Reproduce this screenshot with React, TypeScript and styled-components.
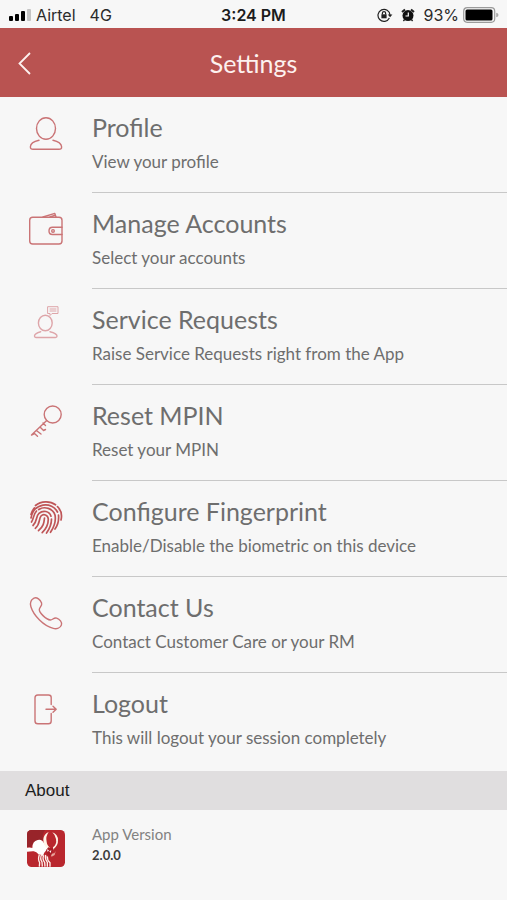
import React from "react";
import styled, { createGlobalStyle } from "styled-components";

const GlobalStyle = createGlobalStyle`
  * { box-sizing: border-box; }
  body { margin: 0; background: #f7f7f7; font-family: Lato, "Open Sans", sans-serif; }
`;

const Page = styled.div`
  min-height: 100vh;
  background: #f7f7f7;
  color: #6e6e6e;
`;

const StatusBar = styled.div`
  display: grid;
  grid-template-columns: 1fr auto 1fr;
  align-items: center;
  height: 28px;
  padding: 2px 8px 0;
  font: 16px/24px Inter, sans-serif;
  color: #2a2a2a;
`;

const StatusGroup = styled.div<{ $end?: boolean }>`
  display: flex;
  align-items: center;
  gap: ${(p) => (p.$end ? 4 : 5)}px;
  justify-content: ${(p) => (p.$end ? "flex-end" : "flex-start")};
`;

const Network = styled.span`
  margin-left: 9px;
`;

const Clock = styled.time`
  font-weight: 600;
  color: #1c1c1c;
`;

const StatusIcon = styled.svg`
  display: block;
  margin-right: 4px;
`;

const TitleBar = styled.header`
  display: grid;
  grid-template-columns: 48px 1fr 48px;
  align-items: center;
  height: 69px;
  background: #b95351;
  color: #fdf1ef;
`;

const BackButton = styled.button`
  display: flex;
  align-items: center;
  height: 48px;
  padding: 0 0 0 17px;
  border: 0;
  background: none;
  color: inherit;
  cursor: pointer;
`;

const Heading = styled.h1`
  margin: 0;
  text-align: center;
  font-size: 25px;
  font-weight: 400;
  line-height: 32px;
`;

const List = styled.ul`
  margin: 0;
  padding: 0 0 2px;
  list-style: none;
`;

const Row = styled.button`
  display: grid;
  grid-template-columns: 92px 1fr;
  width: 100%;
  height: 96px;
  padding: 0;
  border: 0;
  background: none;
  color: inherit;
  font-family: inherit;
  text-align: left;
  cursor: pointer;
`;

const IconCell = styled.span`
  display: flex;
  justify-content: center;
  padding-top: 17px;
`;

const LineIcon = styled.svg<{ $faint?: boolean }>`
  width: 40px;
  height: 40px;
  fill: none;
  stroke: ${(p) => (p.$faint ? "#dea5a9" : "#ca7476")};
  stroke-width: 1.4;
  stroke-linecap: round;
  stroke-linejoin: round;
`;

const RowText = styled.span<{ $last?: boolean }>`
  display: flex;
  flex-direction: column;
  gap: 7px;
  padding-top: 14px;
  border-bottom: 1px solid ${(p) => (p.$last ? "transparent" : "#c8c8c8")};
`;

const RowTitle = styled.span`
  font-size: 25px;
  line-height: 32px;
`;

const RowDetail = styled.span`
  font-size: 17px;
  line-height: 24px;
`;

const SectionTitle = styled.h2`
  margin: 0;
  padding: 0 25px;
  background: #e0dedf;
  color: #1c1c1c;
  font: 400 17px/39px "Liberation Sans", sans-serif;
`;

const Version = styled.section`
  display: grid;
  grid-template-columns: 92px 1fr;
  padding-top: 13px;
`;

const LogoCell = styled.div`
  display: flex;
  justify-content: center;
  padding-top: 7px;
`;

const VersionLabel = styled.div`
  font-size: 15px;
  line-height: 22px;
  color: #828282;
`;

const VersionNumber = styled.div`
  font-size: 13px;
  font-weight: 700;
  line-height: 20px;
  color: #3c3c3c;
`;

const ProfileIcon = () => (
  <LineIcon viewBox="0 0 40 40">
    <ellipse cx="20" cy="14.5" rx="9.5" ry="10.8" />
    <path d="M13 26.3C8 27.4 4.5 29.5 4.4 32.7C4.3 34.6 5.4 35.3 7 35.3H33C34.8 35.3 35.8 34.6 35.6 32.7C35.3 29.5 32 27.4 27 26.3" />
  </LineIcon>
);

const WalletIcon = () => (
  <LineIcon viewBox="0 0 40 40">
    <rect x="3.7" y="7.2" width="32.3" height="26.8" rx="3" />
    <path d="M17 7L28.8 3.4L30 7M24 7L28.5 5.5M36 17.3H26.5Q23 17.3 23 21Q23 24.5 26.5 24.5H36" />
    <circle cx="27" cy="20.9" r="1.3" />
  </LineIcon>
);

const ServiceIcon = () => (
  <LineIcon viewBox="0 0 40 40" $faint>
    <ellipse cx="19.3" cy="17" rx="6.9" ry="7.8" />
    <path d="M14.7 25.7C10.5 26.8 8.5 28.2 8.5 30C8.5 31.6 10 31.5 12 31.5H27C29.5 31.5 31 31.6 31 30C31 28.2 28.5 26.8 24 25.7" />
    <path d="M22 .7H32V7.5H26L24 9.5V7.5H22ZM24 3H30M24 5H30" strokeWidth="1" />
  </LineIcon>
);

const KeyIcon = () => (
  <LineIcon viewBox="0 0 40 40">
    <circle cx="26.7" cy="12.5" r="8.5" />
    <path d="M20.7 18.5L5.5 33L8.5 31.5L11.5 34.3M11 29L15 32M14.5 25.5L17.5 28.5L19.5 27.5M17 21L19.5 23.5" />
  </LineIcon>
);

const FingerprintIcon = () => (
  <LineIcon viewBox="0 0 40 40">
    <g stroke="#bf5557" strokeWidth="1.7">
      <path d="M9.5 7.5C15 3 24 2.7 29.5 6.8M31.5 8.7C35 12 36.2 17 35 22" />
      <path d="M5 16.5C6 13.5 7 11.3 8.5 9.8M5 20C6 14 10 8.3 17 7.1C23 6 29 9 31.5 14M32.5 17C33 22 31.6 27.5 29 31" />
      <path d="M5.5 24C8 20.5 6.8 17 10.5 13M12.7 11.5C18.5 7.8 27 10.5 29 17C30 22 28 29 24.5 34.3" />
      <path d="M7 27.5C11.5 23.5 9.5 18.5 13 15.4C17 11.8 23.4 13 25 18.2M25.5 21C25.5 26 23.5 31 20.5 35" />
      <path d="M9.3 30.3C14.5 26 12.5 21 15 18C17.5 15.4 22 16.8 22.3 21C22.3 26 20 31 16.2 34.6" />
      <path d="M12.5 32.7C17.5 28.5 18 25 18.5 20" />
    </g>
  </LineIcon>
);

const PhoneIcon = () => (
  <LineIcon viewBox="0 0 40 40">
    <path d="M8 4.1C10.8 2.6 14.6 6 15.6 9C16.5 11.8 13.4 13.2 13.3 15.5C13.2 18.8 20.3 25.7 24.3 26C26.6 26.2 27.8 23.1 30.7 24.1C33.5 25 36.5 28.3 35.4 31C34.2 34 30.8 35.3 27.3 34.4C17.7 32 7.6 21.7 4.9 12.8C3.8 9 4.8 5.8 8 4.1Z" />
  </LineIcon>
);

const LogoutIcon = () => (
  <LineIcon viewBox="0 0 40 40">
    <path d="M25.2 14.5V7.5Q25.2 5 22.5 5H11.8Q9 5 9 7.8V31Q9 33.8 11.8 33.8H22.5Q25.2 33.8 25.2 31V23.5M20 19.2H30M27 16.2L30.2 19.2L27 22.2" />
  </LineIcon>
);

const AppLogo = () => (
  <svg width="38" height="37" viewBox="0 0 114 111" role="img" aria-label="App logo">
    <rect width="114" height="111" rx="14" fill="#b9272e" />
    <path d="M0 50V14Q0 0 14 0H54Q45 13 48 30L20 38L12 52Z" fill="#98242a" />
    <path d="M0 53Q10 51 16 54Q16 33 32 30Q45 26 51 40L63 55L56 63Q48 70 48 79Q44 73 36 74Q26 61 17 64L0 65Z" fill="#fff" />
    <path d="M63 57Q48 46 49 28Q50 13 65 6Q55 20 59 35Q60 47 70 53ZM78 52Q90 43 87 27Q85 15 76 7Q93 13 93 31Q94 47 78 59Z" fill="#fff4e8" />
    <path d="M58 59L64 52L79 55L75 71L68 79L60 73Z" fill="#aa1e28" />
    <path d="M60 58L66 61L62 66ZM67 64L73 61L71 69Z" fill="#fff" />
    <path d="M37 74Q32 88 38 98L37 110M44 73Q38 87 45 96L46 110M50 76Q45 88 53 97L54 110M56 75Q53 87 61 97L61 110M61 79Q60 90 69 98L69 110" fill="none" stroke="#fff0ea" strokeWidth="4" />
    <path d="M72 77Q74 69 82 70L86 63L83 75L74 80Z" fill="#e9a39b" />
  </svg>
);

const items = [
  { title: "Profile", detail: "View your profile", Icon: ProfileIcon },
  { title: "Manage Accounts", detail: "Select your accounts", Icon: WalletIcon },
  { title: "Service Requests", detail: "Raise Service Requests right from the App", Icon: ServiceIcon },
  { title: "Reset MPIN", detail: "Reset your MPIN", Icon: KeyIcon },
  { title: "Configure Fingerprint", detail: "Enable/Disable the biometric on this device", Icon: FingerprintIcon },
  { title: "Contact Us", detail: "Contact Customer Care or your RM", Icon: PhoneIcon },
  { title: "Logout", detail: "This will logout your session completely", Icon: LogoutIcon },
];

export default function App() {
  return (
    <Page>
      <GlobalStyle />
      <StatusBar>
        <StatusGroup>
          <svg width="23" height="14" viewBox="0 0 23 14" aria-hidden="true">
            <rect x="1" y="8" width="4" height="5" rx="1" />
            <rect x="7" y="6" width="4" height="7" rx="1" />
            <rect x="13" y="3" width="4" height="10" rx="1" />
            <rect x="19" y="1" width="4" height="12" rx="1" fill="#c4c4c4" />
          </svg>
          <span>Airtel</span>
          <Network>4G</Network>
        </StatusGroup>
        <Clock>3:24 PM</Clock>
        <StatusGroup $end>
          <StatusIcon width="16" height="14" viewBox="0 0 16 14" fill="none" stroke="#222" strokeWidth="1.2" aria-hidden="true">
            <path d="M12.4 10A6 6 0 1 1 13 7" />
            <path d="M10.8 6.5H15.4L13.1 9.3Z" fill="#222" stroke="none" />
            <rect x="4.4" y="6.3" width="5.2" height="4" fill="#222" stroke="none" />
            <path d="M5.4 6.5V5Q5.4 3.6 7 3.6T8.6 5V6.5" />
          </StatusIcon>
          <StatusIcon width="14" height="14" viewBox="0 0 14 14" fill="none" stroke="#222" aria-hidden="true">
            <circle cx="7" cy="7.6" r="5.5" fill="#111" stroke="none" />
            <path d="M1 4L4 1.4M10 1.4L13 4" strokeWidth="2" />
            <path d="M3.6 11.5L2.4 13M10.4 11.5L11.6 13" strokeWidth="1.4" />
            <path d="M7.3 4.4V8H4.5" stroke="#fff" strokeWidth="1.2" />
          </StatusIcon>
          <span>93%</span>
          <svg width="36" height="16" viewBox="0 0 36 16" aria-hidden="true">
            <rect x=".7" y=".7" width="31" height="14.6" rx="3.5" fill="none" stroke="#9b9b9b" strokeWidth="1.2" />
            <rect x="2.5" y="2.5" width="27" height="11" rx="1.5" />
            <path d="M33.2 5.7Q35.5 6 35.5 8T33.2 10.3Z" fill="#aaa" />
          </svg>
        </StatusGroup>
      </StatusBar>
      <TitleBar>
        <BackButton aria-label="Back">
          <svg width="16" height="24" viewBox="0 0 16 24" fill="none" stroke="currentColor" strokeWidth="1.8">
            <path d="M13 2L2.5 12.5L13 23" />
          </svg>
        </BackButton>
        <Heading>Settings</Heading>
      </TitleBar>
      <main>
        <List>
          {items.map(({ title, detail, Icon }, i) => (
            <li key={title}>
              <Row>
                <IconCell aria-hidden="true"><Icon /></IconCell>
                <RowText $last={i === items.length - 1}>
                  <RowTitle>{title}</RowTitle>
                  <RowDetail>{detail}</RowDetail>
                </RowText>
              </Row>
            </li>
          ))}
        </List>
        <SectionTitle>About</SectionTitle>
        <Version>
          <LogoCell><AppLogo /></LogoCell>
          <div>
            <VersionLabel>App Version</VersionLabel>
            <VersionNumber>2.0.0</VersionNumber>
          </div>
        </Version>
      </main>
    </Page>
  );
}
